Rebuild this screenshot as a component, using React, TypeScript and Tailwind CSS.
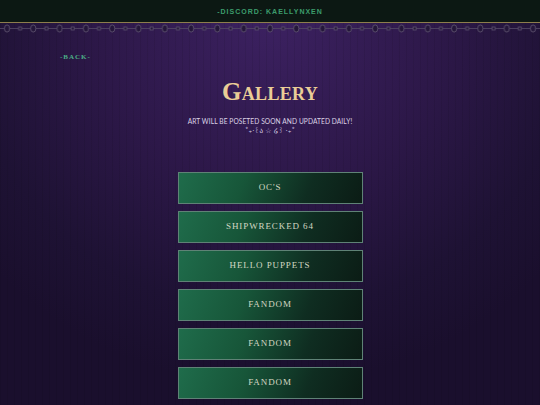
import React from "react";

const galleries = ["OC'S", "SHIPWRECKED 64", "HELLO PUPPETS", "FANDOM", "FANDOM", "FANDOM"];

function ChainBorder() {
  return (
    <svg className="block w-full h-[11px]" aria-hidden="true">
      <defs>
        <pattern id="chain" x="0" y="0" width="26.3" height="11" patternUnits="userSpaceOnUse">
          <line x1="0" y1="5.5" x2="26.3" y2="5.5" stroke="#4f4462" strokeWidth="0.9" />
          <ellipse cx="7" cy="5.5" rx="2.6" ry="3.6" fill="#24163a" stroke="#5a4f6c" strokeWidth="0.9" />
          <rect x="18.6" y="4" width="3" height="3" fill="#24163a" stroke="#5a4f6c" strokeWidth="0.8" />
        </pattern>
      </defs>
      <rect width="100%" height="11" fill="url(#chain)" />
    </svg>
  );
}

export default function App() {
  return (
    <div className="relative w-[540px] h-[405px] overflow-hidden bg-[#1d1233] font-['Liberation_Serif',serif]">
      <div className="absolute inset-0 bg-[radial-gradient(ellipse_70%_90%_at_50%_5%,#3c2161_0%,#2d1849_45%,#1e1234_80%,#1a0f2d_100%)]" />
      <div className="absolute inset-0 bg-[repeating-linear-gradient(90deg,rgba(0,0,0,0.07)_0px,rgba(0,0,0,0.07)_1px,transparent_1px,transparent_7px)]" />

      <div className="relative flex flex-col">
        <header className="h-[23px] bg-[#0c1813] border-b border-[#8d7d4c] flex items-center justify-center">
          <span className="font-['Liberation_Sans',sans-serif] font-bold text-[7px] tracking-[1px] text-[#3c9c6c] leading-none">
            -DISCORD: KAELLYNXEN
          </span>
        </header>
        <ChainBorder />

        <div className="pl-[60px] pt-[8px]">
          <span className="text-[7px] font-bold tracking-[1px] text-[#4bae86] leading-none">-BACK-</span>
        </div>

        <div className="flex flex-col items-center">
          <h1 className="mt-[13px] text-[25px] leading-none font-bold [font-variant:small-caps] tracking-[0.3px] text-[#eacd96]">
            Gallery
          </h1>
          <p className="mt-[14px] font-['Lato',sans-serif] text-[6.6px] leading-none tracking-[0.1px] text-[#ddd4e6]">
            ART WILL BE POSETED SOON AND UPDATED DAILY!
          </p>
          <p className="mt-[3px] font-['DejaVu_Sans',sans-serif] text-[7px] leading-none text-[#d6cde4]">
            ˚₊‧꒰ა ☆ ໒꒱ ‧₊˚
          </p>

          <nav className="mt-[37px] flex flex-col gap-[7px]">
            {galleries.map((name, i) => (
              <a
                key={i}
                className="w-[185px] h-[32px] flex items-center justify-center border border-[#5f8276] bg-[linear-gradient(112deg,#1f6c4b_0%,#175639_35%,#0f2d21_70%,#0b1c15_100%)] text-[9px] tracking-[0.9px] text-[#d3d8c3] leading-none"
              >
                {name}
              </a>
            ))}
          </nav>
        </div>
      </div>
    </div>
  );
}
